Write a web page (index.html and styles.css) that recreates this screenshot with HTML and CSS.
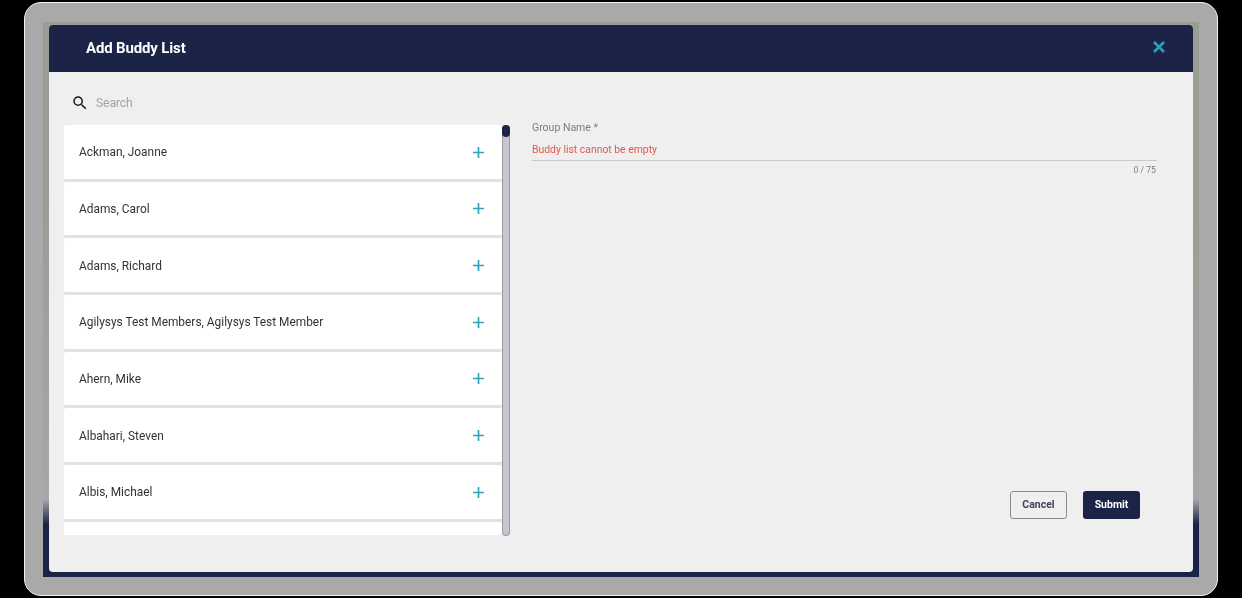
FILE: index.html
```html
<!DOCTYPE html>
<html lang="en">
<head>
<meta charset="utf-8">
<title>Add Buddy List</title>
<link rel="stylesheet" href="styles.css">
</head>
<body>
<div class="frame">
  <div class="backdrop">
    <div class="modal">
      <header class="modal-header">
        <h1 class="modal-title">Add Buddy List</h1>
        <button class="close" aria-label="Close">
          <svg width="14" height="14" viewBox="0 0 14 14"><path d="M2 2 12 12M12 2 2 12" fill="none" stroke="#2b9fbb" stroke-width="2.6"/></svg>
        </button>
      </header>
      <div class="modal-body">
        <section class="left">
          <div class="search">
            <svg class="search-icon" width="18" height="18" viewBox="0 0 24 24"><path d="M15.5 14h-.79l-.28-.27A6.47 6.47 0 0 0 16 9.5 6.5 6.5 0 1 0 9.5 16c1.61 0 3.09-.59 4.23-1.57l.27.28v.79l5 4.99L20.49 19l-4.99-5zm-6 0C7.01 14 5 11.99 5 9.5S7.01 5 9.5 5 14 7.01 14 9.5 11.99 14 9.5 14z" fill="#1d1d1d"/></svg>
            <span class="search-text">Search</span>
          </div>
          <div class="list-wrap">
            <ul class="list">
              <li class="item"><span>Ackman, Joanne</span><svg class="plus" width="13" height="13" viewBox="0 0 13 13"><path d="M6.5 1v11M1 6.500h11"/></svg></li>
              <li class="item"><span>Adams, Carol</span><svg class="plus" width="13" height="13" viewBox="0 0 13 13"><path d="M6.5 1v11M1 6.500h11"/></svg></li>
              <li class="item"><span>Adams, Richard</span><svg class="plus" width="13" height="13" viewBox="0 0 13 13"><path d="M6.5 1v11M1 6.500h11"/></svg></li>
              <li class="item"><span>Agilysys Test Members, Agilysys Test Member</span><svg class="plus" width="13" height="13" viewBox="0 0 13 13"><path d="M6.5 1v11M1 6.500h11"/></svg></li>
              <li class="item"><span>Ahern, Mike</span><svg class="plus" width="13" height="13" viewBox="0 0 13 13"><path d="M6.5 1v11M1 6.500h11"/></svg></li>
              <li class="item"><span>Albahari, Steven</span><svg class="plus" width="13" height="13" viewBox="0 0 13 13"><path d="M6.5 1v11M1 6.500h11"/></svg></li>
              <li class="item"><span>Albis, Michael</span><svg class="plus" width="13" height="13" viewBox="0 0 13 13"><path d="M6.5 1v11M1 6.500h11"/></svg></li>
              <li class="item"></li>
            </ul>
            <div class="scrollbar"><div class="thumb"></div></div>
          </div>
        </section>
        <section class="right">
          <div class="field">
            <label class="field-label">Group Name *</label>
            <div class="field-error">Buddy list cannot be empty</div>
            <div class="field-count">0 / 75</div>
          </div>
          <div class="actions">
            <button class="btn btn-cancel">Cancel</button>
            <button class="btn btn-submit">Submit</button>
          </div>
        </section>
      </div>
    </div>
  </div>
</div>
</body>
</html>
```
FILE: styles.css
```css
* { box-sizing: border-box; }
html, body { height: 100%; }
body {
  margin: 0;
  background: #000;
  font-family: Roboto, "Liberation Sans", sans-serif;
  padding: 2px 24px;
}
.frame {
  height: 594px;
  border: 1px solid #f2f2f2;
  border-radius: 17px;
  background: #a9a9a9;
  padding: 19px 18px 17px;
  filter: blur(0.35px);
}
.backdrop {
  height: 555px;
  padding: 3px 6px 5px;
  background: linear-gradient(180deg, #9a9d93 0%, #9a9d93 30%, #a5a7a8 86%, #1a2347 90.5%, #1a2347 100%);
}
.modal {
  height: 547px;
  background: #efefef;
  border-radius: 4px;
  overflow: hidden;
  display: flex;
  flex-direction: column;
}
.modal-header {
  height: 47px;
  flex: none;
  background: #1b2347;
  display: flex;
  align-items: center;
  justify-content: space-between;
  padding: 0 27px 2px 37px;
}
.modal-title {
  margin: 0;
  font-size: 15px;
  letter-spacing: -0.15px;
  font-weight: 700;
  color: #fff;
}
.close {
  border: 0;
  padding: 0;
  background: none;
  display: flex;
  margin-bottom: 2px;
}
.modal-body {
  flex: 1;
  display: flex;
  padding: 18px 37px 36px 15px;
}
.left {
  width: 446px;
  flex: none;
  display: flex;
  flex-direction: column;
}
.search {
  height: 26px;
  flex: none;
  display: flex;
  align-items: center;
  gap: 7px;
  padding: 0 0 0 7px;
  margin-bottom: 9px;
}
.search-text {
  font-size: 12px;
  letter-spacing: -0.05px;
  color: #a3a3a3;
}
.list-wrap {
  height: 411px;
  display: flex;
}
.list {
  list-style: none;
  margin: 0;
  padding: 0;
  width: 438px;
  height: 410px;
  overflow: hidden;
}
.item {
  height: 56.67px;
  background: #fff;
  border-bottom: 3px solid #e2e2e2;
  border-radius: 3px;
  display: flex;
  align-items: center;
  justify-content: space-between;
  padding: 1px 17px 0 15px;
  font-size: 11.9px;
  color: #333;
}
.plus path {
  fill: none;
  stroke: #2ba5bd;
  stroke-width: 1.7;
}
.scrollbar {
  width: 8px;
  height: 411px;
  background: #c5c6d0;
  border: 1px solid #9c9da3;
  border-width: 0 1px;
  border-radius: 4px;
  border-bottom: 1px solid #9c9da3;
}
.thumb {
  height: 12px;
  margin: 0 -1px;
  background: #1b2347;
  border-radius: 4px;
}
.right {
  flex: 1;
  display: flex;
  flex-direction: column;
  padding: 32px 0 0 22px;
}
.field {
  display: flex;
  flex-direction: column;
  margin-right: -1px;
}
.field-label {
  font-size: 10.5px;
  line-height: 12px;
  color: #7d7d7d;
}
.field-error {
  margin-top: 10px;
  height: 17px;
  font-size: 10.4px;
  line-height: 12px;
  color: #dd5a4d;
  border-bottom: 1px solid #c9c9c9;
}
.field-count {
  margin-top: 3px;
  padding-right: 1px;
  text-align: right;
  font-size: 8.7px;
  line-height: 12px;
  color: #7d7d7d;
}
.actions {
  margin-top: auto;
  margin-bottom: 17px;
  display: flex;
  justify-content: flex-end;
  gap: 16px;
  padding-right: 16px;
}
.btn {
  width: 57px;
  height: 28px;
  border-radius: 3px;
  font-family: inherit;
  font-size: 10.5px;
  font-weight: 700;
  padding: 0 0 2px;
}
.btn-cancel {
  background: transparent;
  border: 1px solid #8a8a8f;
  color: #3f4454;
}
.btn-submit {
  background: #1b2347;
  border: 0;
  color: #fff;
}
```
